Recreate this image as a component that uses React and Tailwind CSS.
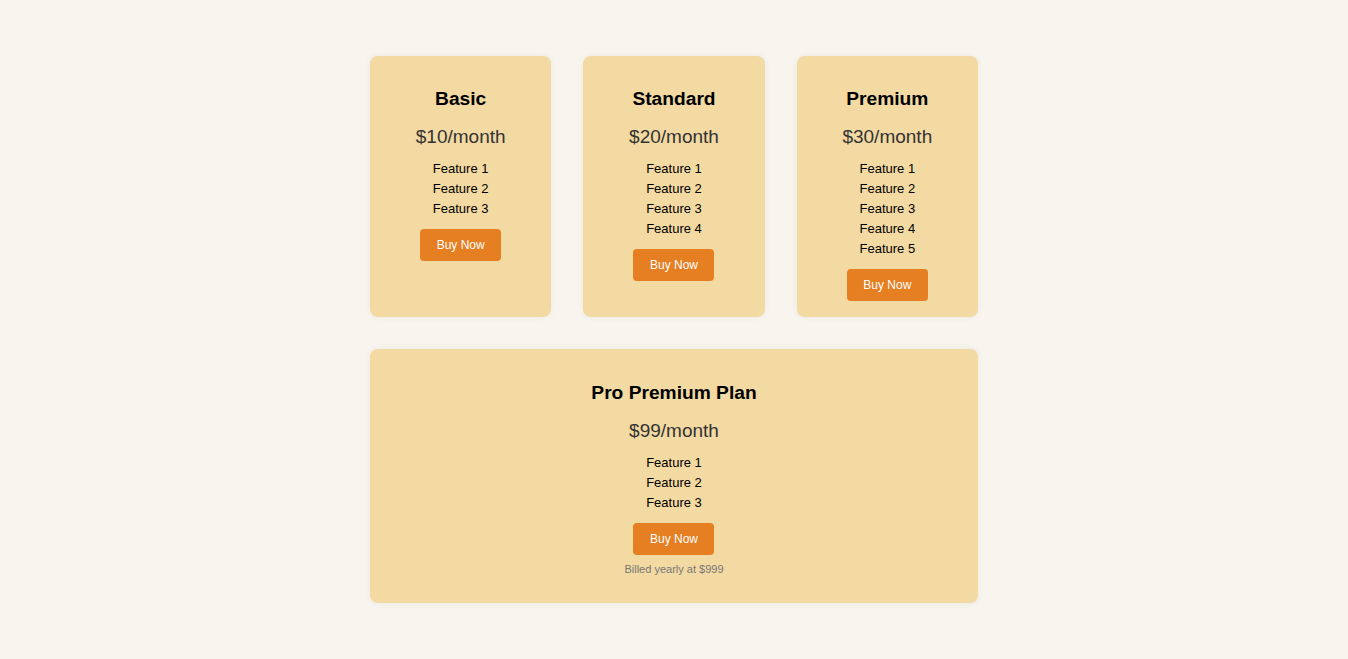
export default function App() {
  const plans = [
    { name: "Basic", price: "$10/month", features: 3 },
    { name: "Standard", price: "$20/month", features: 4 },
    { name: "Premium", price: "$30/month", features: 5 },
  ];

  return (
    <main
      className="min-h-screen w-full bg-[#f8f4ee] pt-14"
      style={{ fontFamily: '"Liberation Sans", Arial, sans-serif' }}
    >
      <div className="mx-auto grid w-[608px] grid-cols-3 gap-x-8 gap-y-8">
        {plans.map((plan) => (
          <div
            key={plan.name}
            className="flex flex-col items-center rounded-lg bg-[#f3d9a2] px-4 pt-[31px] pb-[16px] text-center shadow-[0_0_6px_rgba(0,0,0,0.06)]"
          >
            <h3 className="text-[19.2px] font-bold leading-6 text-black">{plan.name}</h3>
            <div className="mt-[14px] text-[19px] leading-6 text-[#333]">{plan.price}</div>
            <ul className="mt-[10px]">
              {Array.from({ length: plan.features }).map((_, i) => (
                <li key={i} className="text-[13px] leading-5 text-black">
                  Feature {i + 1}
                </li>
              ))}
            </ul>
            <button className="mt-[10px] h-8 w-[81px] rounded bg-[#e67e22] text-[12px] text-white">
              Buy Now
            </button>
          </div>
        ))}

        {/* Pro plan spans the full row */}
        <div className="col-span-3 flex flex-col items-center rounded-lg bg-[#f3d9a2] px-4 pt-[32px] pb-[15px] text-center shadow-[0_0_6px_rgba(0,0,0,0.06)]">
          <h3 className="text-[19.2px] font-bold leading-6 text-black">Pro Premium Plan</h3>
          <div className="mt-[14px] text-[19px] leading-6 text-[#333]">$99/month</div>
          <ul className="mt-[10px]">
            {[1, 2, 3].map((n) => (
              <li key={n} className="text-[13px] leading-5 text-black">
                Feature {n}
              </li>
            ))}
          </ul>
          <button className="mt-[10px] h-8 w-[81px] rounded bg-[#e67e22] text-[12px] text-white">
            Buy Now
          </button>
          <p className="mt-[7px] mb-[12px] text-[11px] leading-[14px] text-[#777]">
            Billed yearly at $999
          </p>
        </div>
      </div>
    </main>
  );
}
